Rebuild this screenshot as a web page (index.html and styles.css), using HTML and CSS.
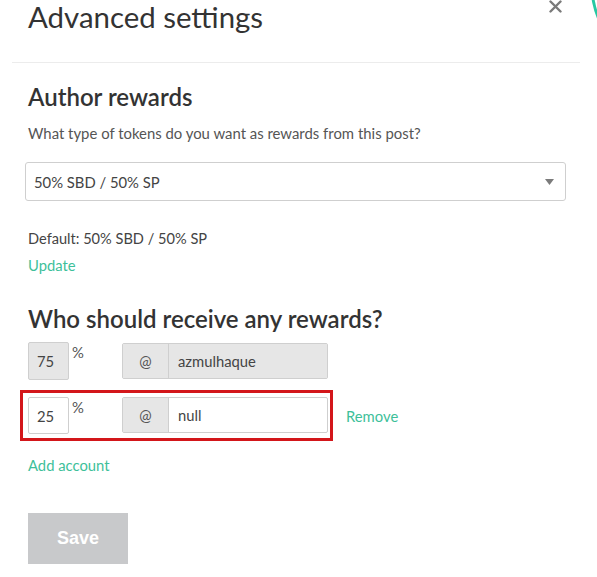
FILE: index.html
```html
<!DOCTYPE html>
<html>
<head>
<meta charset="utf-8">
<link rel="stylesheet" href="styles.css">
</head>
<body>
<div class="modal">
  <div class="header">
    <h1 class="title">Advanced settings</h1>
    <button class="close" aria-label="Close">
      <svg width="13" height="13" viewBox="0 0 13 13"><path d="M1.5 1.5 L11.5 11.5 M11.5 1.5 L1.5 11.5" stroke="#7a7a7a" stroke-width="2.4" stroke-linecap="round"/></svg>
    </button>
    <div class="arc"></div>
  </div>
  <div class="divider"></div>
  <div class="body">
    <h2 class="section-title">Author rewards</h2>
    <p class="hint">What type of tokens do you want as rewards from this post?</p>
    <div class="select">
      <span>50% SBD / 50% SP</span>
      <svg class="caret" width="9" height="6" viewBox="0 0 9 6"><path d="M0 0 H9 L4.5 6 Z" fill="#7b7b7b"/></svg>
    </div>
    <p class="default">Default: 50% SBD / 50% SP</p>
    <a class="link update">Update</a>

    <h2 class="section-title who">Who should receive any rewards?</h2>
    <div class="row">
      <div class="pct disabled">75</div>
      <span class="pct-sign">%</span>
      <div class="account disabled">
        <span class="at">@</span>
        <span class="name">azmulhaque</span>
      </div>
    </div>
    <div class="row highlighted">
      <div class="pct">25</div>
      <span class="pct-sign">%</span>
      <div class="account">
        <span class="at">@</span>
        <span class="name">null</span>
      </div>
      <a class="link remove">Remove</a>
    </div>
    <a class="link add">Add account</a>
    <button class="save">Save</button>
  </div>
</div>
</body>
</html>
```

FILE: styles.css
```css
*, *::before, *::after { box-sizing: border-box; }
html, body { margin: 0; padding: 0; background: #fff; }
body {
  font-family: "Source Sans Pro", Lato, "Open Sans", sans-serif;
  color: #333;
  width: 597px;
  height: 577px;
  overflow: hidden;
}
.modal { position: relative; width: 597px; overflow: hidden; }
.header {
  position: relative;
  height: 62px;
  padding-left: 28px;
  overflow: hidden;
}
.title {
  margin: 0;
  font-weight: 400;
  font-size: 29.4px;
  line-height: 34px;
  color: #333;
  white-space: nowrap;
}
.close {
  position: absolute;
  left: 549px;
  top: 0;
  padding: 0;
  border: 0;
  background: none;
  line-height: 0;
}
.arc {
  position: absolute;
  left: 590px;
  top: -80px;
  width: 60px;
  height: 120px;
  border-radius: 50%;
  border: 3px solid #27c9a3;
}
.divider {
  margin: 0 17px 0 12px;
  height: 1px;
  background: #ececec;
}
.body { padding-left: 28px; }
.section-title {
  margin: 0;
  font-size: 24px;
  font-weight: 600;
  line-height: 28px;
  color: #333;
}
.body > .section-title:first-child { margin-top: 20px; }
.hint {
  margin: 12px 0 0;
  font-size: 14.9px;
  line-height: 20px;
  color: #555;
}
.select {
  margin: 19px 0 0 -3px;
  width: 541px;
  height: 39px;
  border: 1px solid #cfcfcf;
  border-radius: 3px;
  display: flex;
  align-items: center;
  justify-content: space-between;
  padding: 0 11px 0 8px;
  font-size: 14.8px;
  color: #444;
}
.caret { margin-top: 1px; }
.default {
  margin: 28px 0 0;
  font-size: 14.6px;
  line-height: 20px;
  color: #444;
}
.link {
  display: block;
  color: #3ebf9a;
  font-size: 14.8px;
  line-height: 20px;
}
.update { margin-top: 6px; }
.who { margin-top: 30px; }
.row {
  display: flex;
  align-items: flex-start;
  margin-top: 9px;
}
.pct {
  width: 41px;
  height: 38px;
  border: 1px solid #cfcfcf;
  border-radius: 2px;
  font-size: 14.8px;
  color: #444;
  padding: 0 0 0 8px;
  display: flex;
  align-items: center;
}
.pct-sign {
  font-size: 14.8px;
  color: #555;
  margin-left: 3px;
  line-height: 20px;
  width: 50px;
}
.account {
  display: flex;
  width: 206px;
  height: 36px;
  margin-top: 1px;
  border: 1px solid #cfcfcf;
  border-radius: 2px;
  font-size: 14.8px;
  color: #444;
}
.at {
  width: 46px;
  display: flex;
  align-items: center;
  justify-content: center;
  background: #e6e6e6;
  border-right: 1px solid #cfcfcf;
  color: #555;
}
.name {
  display: flex;
  align-items: center;
  padding-left: 9px;
  flex: 1;
}
.disabled, .disabled .name { background: #e6e6e6; }
.highlighted {
  margin-left: -8px;
  margin-top: 10px;
  width: 400px;
  padding: 7px 0 7px 8px;
  position: relative;
}
.highlighted::before {
  content: "";
  position: absolute;
  left: 0;
  top: 0;
  width: 313px;
  height: 51px;
  border: 3px solid #d3161a;
}
.highlighted .pct { height: 37px; }
.highlighted .account { margin-top: 0; }
.remove { margin-left: 18px; align-self: center; }
.add { margin-top: 14px; }
.save {
  display: block;
  margin-top: 38px;
  width: 100px;
  height: 51px;
  border: 0;
  background: #c8c9cb;
  color: #fff;
  font-family: "Liberation Sans", Arial, sans-serif;
  font-weight: 700;
  font-size: 18px;
  padding: 0;
}
```
